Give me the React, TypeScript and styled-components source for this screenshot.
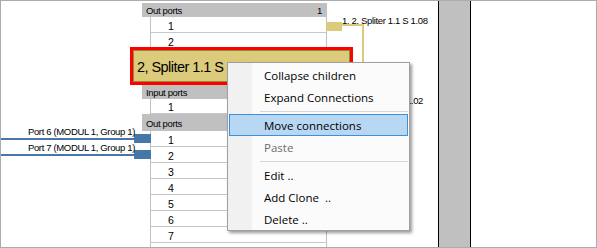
import styled, { createGlobalStyle } from 'styled-components';

const GlobalStyle = createGlobalStyle`
  html,
  body {
    margin: 0;
    padding: 0;
    background: #ffffff;
  }
`;

const Frame = styled.div`
  display: flex;
  box-sizing: border-box;
  width: 597px;
  height: 248px;

  border: 1px solid #ababab;
  background: #ffffff;
`;

const Canvas = styled.div`
  position: relative;
  flex: 0 0 437px;
  overflow: hidden;

  font-family: 'Liberation Sans', Arial, sans-serif;
  color: #000000;
`;

const Splitter = styled.div`
  flex: 0 0 31px;

  border-left: 1px solid #000000;
  border-right: 1px solid #000000;
  background: #c0c0c0;
`;

const SidePane = styled.div`
  flex: 1;
  background: #ffffff;
`;

const NodeColumn = styled.div`
  position: absolute;
  left: 141px;
  top: 2px;

  display: flex;
  flex-direction: column;
  width: 185px;
`;

const SectionHeader = styled.div<{ h: number }>`
  display: flex;
  align-items: center;
  justify-content: space-between;
  box-sizing: border-box;
  height: ${(p) => p.h}px;
  padding: 1px 5px 0 4px;

  background: #c0c0c0;
  font-size: 9.5px;
  letter-spacing: -0.35px;
`;

const PortRow = styled.div<{ h?: number }>`
  display: flex;
  align-items: center;
  box-sizing: border-box;
  height: ${(p) => p.h ?? 16}px;
  margin-left: 8px;
  padding: 2px 0 0 17px;

  border-left: 1px solid #c0c0c0;
  border-right: 1px solid #c0c0c0;
  border-bottom: 1px solid #c8c8c8;
  background: #ffffff;
  font-size: 10.5px;
`;

const NodeTitle = styled.div`
  display: flex;
  align-items: center;
  box-sizing: border-box;
  height: 38px;
  margin: -2px -26px 0 -12px;
  padding: 1px 0 0 4px;

  border: 3px solid #ff0000;
  background: #dccb7a;
  box-shadow: inset 0 0 0 1px #8f8a3c;
  font-size: 14.5px;
  letter-spacing: -0.55px;
  white-space: nowrap;
  overflow: hidden;
`;

const Wires = styled.svg`
  position: absolute;
  left: 0;
  top: 0;
  width: 437px;
  height: 246px;
  pointer-events: none;
`;

const WireLabel = styled.div<{ x: number; y: number; alignRight?: boolean }>`
  position: absolute;
  top: ${(p) => p.y}px;
  ${(p) => (p.alignRight ? `right: ${437 - p.x}px;` : `left: ${p.x}px;`)}

  font-size: 9.5px;
  line-height: 12px;
  letter-spacing: -0.35px;
  white-space: nowrap;
`;

const Menu = styled.div`
  position: absolute;
  left: 226px;
  top: 61px;

  display: flex;
  flex-direction: column;
  box-sizing: border-box;
  width: 183px;
  padding-top: 1px;

  border: 1px solid #a0a0a0;
  background: linear-gradient(to right, #f1f1f1 0, #f1f1f1 24px, #fbfbfb 24px);
  box-shadow: 2px 2px 3px rgba(0, 0, 0, 0.4);

  font-family: 'Open Sans', 'Noto Sans', sans-serif;
  font-size: 11.5px;
`;

const MenuItem = styled.div<{ active?: boolean; disabled?: boolean }>`
  display: flex;
  align-items: center;
  box-sizing: border-box;
  height: 22px;
  margin: 0 1px;
  padding-left: 34px;

  border: 1px solid ${(p) => (p.active ? '#3f8fdc' : 'transparent')};
  background: ${(p) => (p.active ? '#b8d7f3' : 'transparent')};
  color: ${(p) => (p.disabled ? '#6d6d6d' : '#000000')};
  white-space: nowrap;
`;

const MenuSeparator = styled.div`
  height: 0;
  margin: 3px 1px 2px 32px;
  border-top: 1px solid #d7d7d7;
`;

const outPorts = ['1', '2', '3', '4', '5', '6', '7', ''];

export default function App() {
  return (
    <>
      <GlobalStyle />
      <Frame>
        <Canvas>
          <NodeColumn>
            <SectionHeader h={14}>
              <span>Out ports</span>
              <span>1</span>
            </SectionHeader>
            <PortRow>1</PortRow>
            <PortRow>2</PortRow>
            <NodeTitle>2, Spliter 1.1 S 1.1</NodeTitle>
            <SectionHeader h={14}>
              <span>Input ports</span>
            </SectionHeader>
            <PortRow h={15}>1</PortRow>
            <SectionHeader h={17}>
              <span>Out ports</span>
            </SectionHeader>
            {outPorts.map((n, i) => (
              <PortRow key={i}>{n}</PortRow>
            ))}
          </NodeColumn>

          <Wires viewBox="0 0 437 246">
            <rect x={325} y={21} width={16} height={9} fill="#dccb7a" />
            <polyline points="341,24 362,24 362,140" fill="none" stroke="#dccb7a" strokeWidth={2} />
            <rect x={0} y={137} width={134} height={2} fill="#4677a8" />
            <rect x={133} y={133} width={17} height={9} fill="#4677a8" />
            <rect x={0} y={153} width={134} height={2} fill="#4677a8" />
            <rect x={133} y={149} width={17} height={9} fill="#4677a8" />
          </Wires>

          <WireLabel x={341} y={14}>1. 2. Spliter 1.1 S 1.08</WireLabel>
          <WireLabel x={422} y={94} alignRight>
            1.02
          </WireLabel>
          <WireLabel x={134} y={125} alignRight>
            Port 6 (MODUL 1, Group 1)
          </WireLabel>
          <WireLabel x={134} y={141} alignRight>
            Port 7 (MODUL 1, Group 1)
          </WireLabel>

          <Menu>
            <MenuItem>Collapse children</MenuItem>
            <MenuItem>Expand Connections</MenuItem>
            <MenuSeparator />
            <MenuItem active>Move connections</MenuItem>
            <MenuItem disabled>Paste</MenuItem>
            <MenuSeparator />
            <MenuItem>Edit ..</MenuItem>
            <MenuItem>Add Clone &nbsp;..</MenuItem>
            <MenuItem>Delete ..</MenuItem>
          </Menu>
        </Canvas>
        <Splitter />
        <SidePane />
      </Frame>
    </>
  );
}
